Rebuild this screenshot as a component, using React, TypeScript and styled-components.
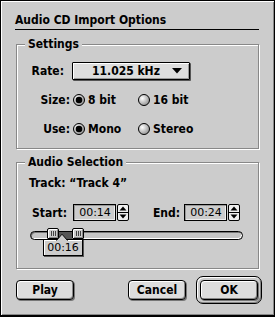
import React, { useId } from 'react';
import styled, { createGlobalStyle } from 'styled-components';

const GlobalStyle = createGlobalStyle`
  html, body { margin: 0; padding: 0; background: #cccccc; }
  body { font-family: "DejaVu Sans", "Noto Sans", sans-serif; color: #000; }
  * { box-sizing: border-box; }
`;

const Window = styled.div`
  width: 275px;
  height: 317px;
  background: #cccccc;
  border: 1px solid #000;
  border-bottom-width: 2px;
  box-shadow: inset 1px 1px 0 #ffffff, inset -1px -1px 0 #888888;
  padding: 12px 0 0 14px;
  display: flex;
  flex-direction: column;
  font-family: "DejaVu Sans", sans-serif;
  font-weight: bold;
  font-size: 12px;
  font-stretch: semi-condensed;
`;

const Title = styled.div`
  width: 244px;
  height: 17px;
  line-height: 14px;
  padding-bottom: 2px;
  border-bottom: 1px solid #000;
`;

const GroupBox = styled.div<{ $mt: number; $pt: number; $pb: number }>`
  position: relative;
  width: 243px;
  margin: ${(p) => p.$mt}px 0 0 1px;
  padding: ${(p) => p.$pt}px 0 ${(p) => p.$pb}px 0;
  border: 1px solid #888888;
  box-shadow: inset 1px 1px 0 #ffffff, 1px 1px 0 #ffffff;
  display: flex;
  flex-direction: column;
`;

const GroupLabel = styled.div`
  position: absolute;
  top: -8px;
  left: 8px;
  padding: 0 3px;
  line-height: 14px;
  background: #cccccc;
`;

const Row = styled.div<{ $h: number; $mt?: number; $pl?: number }>`
  display: flex;
  align-items: center;
  height: ${(p) => p.$h}px;
  margin-top: ${(p) => p.$mt ?? 0}px;
  padding-left: ${(p) => p.$pl ?? 0}px;
`;

const Label = styled.span<{ $w: number; $gap: number }>`
  width: ${(p) => p.$w}px;
  margin-right: ${(p) => p.$gap}px;
  text-align: right;
  white-space: nowrap;
`;

const Popup = styled.div`
  width: 118px;
  height: 18px;
  border: 1px solid #000;
  border-radius: 1px;
  background: #dddddd;
  box-shadow: inset 1px 1px 0 #ffffff, inset -1px -1px 0 #999999, 1px 1px 0 #555555;
  display: flex;
  align-items: center;
  padding-left: 19px;
  padding-right: 7px;
  justify-content: space-between;
`;

const RadioOption = styled.label`
  width: 65px;
  display: flex;
  align-items: center;
  gap: 3px;
  white-space: nowrap;
`;

const Field = styled.div`
  width: 43px;
  height: 17px;
  border: 1px solid #000;
  box-shadow: inset 1px 1px 0 #999999, inset -1px -1px 0 #eeeeee;
  font: 11px "DejaVu Sans", sans-serif;
  line-height: 15px;
  text-align: center;
  padding-left: 1px;
`;

const StepperWrap = styled.div`
  margin-left: 1px;
  display: flex;
`;

const Plain = styled.span`
  white-space: nowrap;
`;

const SliderArea = styled.div`
  position: relative;
  width: 213px;
  height: 28px;
  margin: 7px 0 0 13px;
`;

const Track = styled.div`
  position: absolute;
  top: 3px;
  left: 0;
  right: 0;
  height: 9px;
  border: 1px solid #000;
  border-radius: 5px;
  background: #c4c4c4;
  box-shadow: inset 1px 1px 0 #777777, inset -1px -1px 0 #ffffff;
`;

const RangeFill = styled.div`
  position: absolute;
  top: 4px;
  height: 7px;
  background: #555555;
`;

const Thumb = styled.div`
  position: absolute;
  top: 0;
  width: 12px;
  height: 11px;
  border: 1px solid #000;
  border-radius: 2px 2px 1px 1px;
  background: #cccccc;
  box-shadow: inset 1px 1px 0 #ffffff, inset -1px -1px 0 #888888;
  display: flex;
  justify-content: center;
  padding-top: 2px;
`;

const Grip = styled.div`
  width: 5px;
  height: 5px;
  background: repeating-linear-gradient(90deg, #444 0 1px, transparent 1px 2px);
`;

const Tip = styled.div`
  position: absolute;
  top: 11px;
  left: 13px;
  width: 40px;
  height: 17px;
  border: 1px solid #000;
  background: #cccccc;
  box-shadow: inset 1px 1px 0 #ffffff, 1px 1px 0 #555555;
  font: 11px "DejaVu Sans", sans-serif;
  line-height: 15px;
  text-align: center;
`;

const Notch = styled.svg`
  position: absolute;
  top: -7px;
  left: 12px;
  overflow: visible;
`;

const ButtonRow = styled.div`
  display: flex;
  align-items: center;
  margin: 7px 0 0 1px;
  height: 28px;
`;

const Button = styled.button<{ $ml?: number }>`
  width: 58px;
  height: 20px;
  margin-left: ${(p) => p.$ml ?? 0}px;
  border: 1px solid #000;
  border-radius: 4px;
  background: #dddddd;
  box-shadow: inset 1px 1px 0 #ffffff, inset -1px -1px 0 #888888, 1px 1px 0 #777777;
  font-family: "DejaVu Sans", sans-serif;
  font-weight: bold;
  font-size: 12px;
  font-stretch: semi-condensed;
  color: #000;
  padding: 0;
`;

const DefaultRing = styled.div<{ $ml: number }>`
  width: 66px;
  height: 28px;
  margin-left: ${(p) => p.$ml}px;
  padding: 3px;
  border: 1px solid #000;
  border-radius: 7px;
  background: #cccccc;
  box-shadow: inset 1px 1px 0 #ffffff, inset -1px -1px 0 #888888;
  display: flex;
`;

function Radio({ checked }: { checked?: boolean }) {
  const id = useId().replace(/:/g, '');
  return (
    <svg width="12" height="12" viewBox="0 0 12 12">
      <defs>
        <radialGradient id={id} cx="35%" cy="35%" r="75%">
          <stop offset="0" stopColor="#ffffff" />
          <stop offset="1" stopColor="#8a8a8a" />
        </radialGradient>
      </defs>
      <circle cx="6" cy="6" r="5.5" fill={`url(#${id})`} stroke="#000" />
      {checked && <circle cx="6" cy="6" r="3.3" fill="#000" />}
    </svg>
  );
}

function Stepper() {
  return (
    <svg width="12" height="17" viewBox="0 0 12 17">
      <rect x="0.5" y="0.5" width="11" height="16" rx="1.5" fill="#eeeeee" stroke="#000" />
      <line x1="1" y1="8.5" x2="11" y2="8.5" stroke="#000" />
      <path d="M6 2.5 L9.5 6.5 L2.5 6.5 Z" fill="#000" />
      <path d="M2.5 10.5 L9.5 10.5 L6 14.5 Z" fill="#000" />
    </svg>
  );
}

function PopupArrow() {
  return (
    <svg width="10" height="6" viewBox="0 0 10 6">
      <path d="M0 0 L10 0 L5 5.5 Z" fill="#000" />
    </svg>
  );
}

export default function App() {
  return (
    <>
      <GlobalStyle />
      <Window>
        <Title>Audio CD Import Options</Title>

        <GroupBox $mt={14} $pt={17} $pb={10}>
          <GroupLabel>Settings</GroupLabel>
          <Row $h={18}>
            <Label $w={47} $gap={8}>Rate:</Label>
            <Popup>
              <span>11.025 kHz</span>
              <PopupArrow />
            </Popup>
          </Row>
          <Row $h={18} $mt={11}>
            <Label $w={53} $gap={3}>Size:</Label>
            <RadioOption>
              <Radio checked />8 bit
            </RadioOption>
            <RadioOption>
              <Radio />16 bit
            </RadioOption>
          </Row>
          <Row $h={18} $mt={11}>
            <Label $w={53} $gap={3}>Use:</Label>
            <RadioOption>
              <Radio checked />Mono
            </RadioOption>
            <RadioOption>
              <Radio />Stereo
            </RadioOption>
          </Row>
        </GroupBox>

        <GroupBox $mt={13} $pt={12} $pb={12}>
          <GroupLabel>Audio Selection</GroupLabel>
          <Row $h={16} $pl={12}>
            <Plain>Track: “Track 4”</Plain>
          </Row>
          <Row $h={17} $mt={13}>
            <Label $w={50} $gap={6}>Start:</Label>
            <Field>00:14</Field>
            <StepperWrap>
              <Stepper />
            </StepperWrap>
            <Label $w={51} $gap={4}>End:</Label>
            <Field>00:24</Field>
            <StepperWrap>
              <Stepper />
            </StepperWrap>
          </Row>
          <SliderArea>
            <Track />
            <RangeFill style={{ left: 28, width: 14 }} />
            <Thumb style={{ left: 17 }}>
              <Grip />
            </Thumb>
            <Thumb style={{ left: 42 }}>
              <Grip />
            </Thumb>
            <Tip>
              <Notch width="12" height="8" viewBox="0 0 12 8">
                <path d="M0 8 L6 1 L12 8 Z" fill="#cccccc" />
                <path d="M0.5 7.5 L6 1.2 L11.5 7.5" fill="none" stroke="#000" />
              </Notch>
              00:16
            </Tip>
          </SliderArea>
        </GroupBox>

        <ButtonRow>
          <Button>Play</Button>
          <Button $ml={54}>Cancel</Button>
          <DefaultRing $ml={10}>
            <Button>OK</Button>
          </DefaultRing>
        </ButtonRow>
      </Window>
    </>
  );
}
